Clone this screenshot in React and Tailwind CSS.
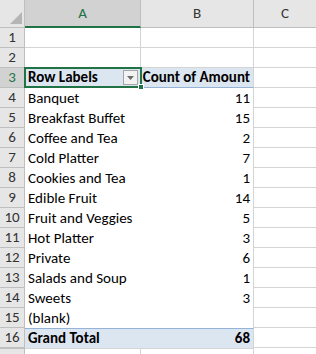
import React from "react";

const rows = [
  { label: "Banquet", count: 11 },
  { label: "Breakfast Buffet", count: 15 },
  { label: "Coffee and Tea", count: 2 },
  { label: "Cold Platter", count: 7 },
  { label: "Cookies and Tea", count: 1 },
  { label: "Edible Fruit", count: 14 },
  { label: "Fruit and Veggies", count: 5 },
  { label: "Hot Platter", count: 3 },
  { label: "Private", count: 6 },
  { label: "Salads and Soup", count: 1 },
  { label: "Sweets", count: 3 },
  { label: "(blank)", count: "" },
];

const RowHead = ({ n, active }) => (
  <div
    className={`w-[25px] shrink-0 flex items-center justify-center border-r border-b border-[#bfbfbf] text-[15px] ${
      active ? "bg-[#d2d2d2] text-[#217346]" : "bg-[#e6e6e6] text-[#333]"
    }`}
  >
    {n}
  </div>
);

const App = () => {
  return (
    <div
      className="w-[316px] h-[354px] overflow-hidden bg-white text-black text-[15px] leading-none"
      style={{ fontFamily: "Carlito, Lato, 'Liberation Sans', sans-serif" }}
    >
      {/* column headers */}
      <div className="flex h-[28px]">
        <div className="w-[25px] shrink-0 bg-[#e6e6e6] border-r border-b border-[#bfbfbf] relative">
          <svg className="absolute right-[2px] bottom-[3px]" width="12" height="12" viewBox="0 0 12 12">
            <polygon points="12,0 12,12 0,12" fill="#b5b5b5" />
          </svg>
        </div>
        <div className="w-[116px] shrink-0 bg-[#d2d2d2] border-r border-[#bfbfbf] border-b-2 border-b-[#217346] flex items-center justify-center text-[#217346] text-[15px]">
          A
        </div>
        <div className="w-[113px] shrink-0 bg-[#e6e6e6] border-r border-b border-[#bfbfbf] flex items-center justify-center text-[#333] text-[15px]">
          B
        </div>
        <div className="flex-1 bg-[#e6e6e6] border-b border-[#bfbfbf] flex items-center justify-center text-[#333] text-[15px]">
          C
        </div>
      </div>

      {/* rows 1-2 */}
      {[1, 2].map((n) => (
        <div key={n} className="flex h-[20px]">
          <RowHead n={n} />
          <div className="w-[116px] shrink-0 border-r border-b border-[#d4d4d4]" />
          <div className="w-[113px] shrink-0 border-r border-b border-[#d4d4d4]" />
          <div className="flex-1 border-b border-[#d4d4d4]" />
        </div>
      ))}

      {/* row 3 pivot header */}
      <div className="flex h-[20px]">
        <RowHead n={3} active />
        <div className="w-[116px] shrink-0 bg-[#dce6f1] border-b border-[#95b3d7] relative flex items-center pl-[3px] font-bold">
          Row Labels
          <div className="absolute right-[3px] top-[2px] w-[15px] h-[15px] border border-[#a6a6a6] bg-[#f2f2f2] flex items-center justify-center">
            <svg width="7" height="4" viewBox="0 0 7 4">
              <polygon points="0,0 7,0 3.5,4" fill="#6b6b6b" />
            </svg>
          </div>
          <div className="absolute -left-[1px] -top-[1px] -right-[1px] -bottom-[1px] border-2 border-[#217346]" />
          <div className="absolute -right-[3px] -bottom-[3px] w-[6px] h-[6px] bg-[#217346] border border-white" />
        </div>
        <div className="w-[113px] shrink-0 bg-[#dce6f1] border-r border-[#d4d4d4] border-b border-b-[#95b3d7] flex items-center justify-end pr-[3px] font-bold whitespace-nowrap">
          Count of Amount
        </div>
        <div className="flex-1 border-b border-[#d4d4d4]" />
      </div>

      {/* pivot body */}
      {rows.map((r, i) => (
        <div key={r.label} className="flex h-[20px]">
          <RowHead n={i + 4} />
          <div className="w-[116px] shrink-0 flex items-center pl-[3px] whitespace-nowrap">{r.label}</div>
          <div className="w-[113px] shrink-0 border-r border-[#d4d4d4] flex items-center justify-end pr-[3px]">
            {r.count}
          </div>
          <div className="flex-1 border-b border-[#d4d4d4]" />
        </div>
      ))}

      {/* grand total */}
      <div className="flex h-[20px]">
        <RowHead n={16} />
        <div className="w-[116px] shrink-0 bg-[#dce6f1] border-t border-[#95b3d7] flex items-center pl-[3px] font-bold">
          Grand Total
        </div>
        <div className="w-[113px] shrink-0 bg-[#dce6f1] border-t border-[#95b3d7] border-r border-r-[#d4d4d4] flex items-center justify-end pr-[3px] font-bold">
          68
        </div>
        <div className="flex-1 border-b border-[#d4d4d4]" />
      </div>

      {/* row 17 partial */}
      <div className="flex h-[20px]">
        <div className="w-[25px] shrink-0 bg-[#e6e6e6] border-r border-t border-[#bfbfbf]" />
        <div className="w-[116px] shrink-0 border-r border-t border-[#d4d4d4]" />
        <div className="w-[113px] shrink-0 border-r border-t border-[#d4d4d4]" />
        <div className="flex-1" />
      </div>
    </div>
  );
};

export default App;
